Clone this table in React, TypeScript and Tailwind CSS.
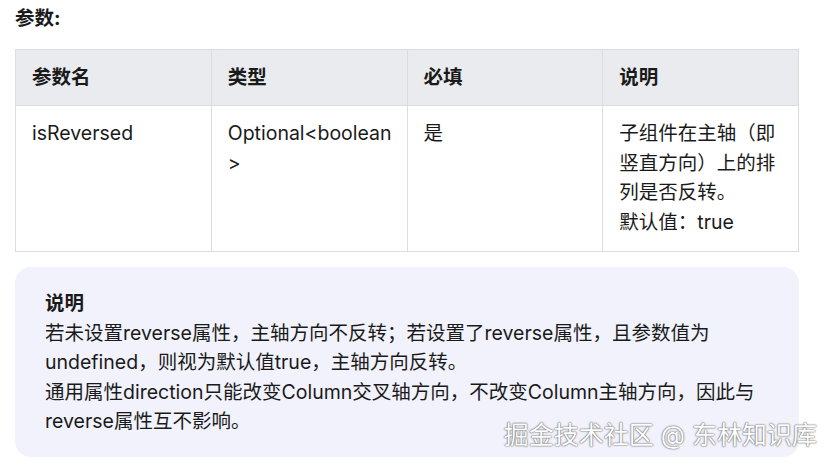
import React from 'react';

// 参数表 + 说明框
const columns = ['参数名', '类型', '必填', '说明'];

const App = () => {
  return (
    <div
      className="relative w-[833px] h-[464px] bg-white px-[15px] pt-[4px] text-[19.5px] leading-[29.5px] text-[#1a1a1a] overflow-hidden"
      style={{ fontFamily: 'Inter, "Noto Sans CJK SC", sans-serif' }}
    >
      <div className="font-bold">参数:</div>

      <table className="mt-[15px] w-[784px] border-collapse table-fixed">
        <thead>
          <tr className="bg-[#e9ebee]">
            {columns.map((col) => (
              <th
                key={col}
                className="border border-[#dcdcdc] px-4 py-[13px] text-left font-bold leading-[29.5px]"
              >
                {col}
              </th>
            ))}
          </tr>
        </thead>
        <tbody>
          <tr className="align-top">
            <td className="border border-[#dcdcdc] px-4 pt-[13px] pb-[14px]">isReversed</td>
            <td className="border border-[#dcdcdc] px-4 pt-[13px] pb-[14px]">
              Optional&lt;boolean
              <br />
              &gt;
            </td>
            <td className="border border-[#dcdcdc] px-4 pt-[13px] pb-[14px]">是</td>
            <td className="border border-[#dcdcdc] px-4 pt-[13px] pb-[14px]">
              <p>子组件在主轴（即竖直方向）上的排列是否反转。</p>
              <p>默认值：true</p>
            </td>
          </tr>
        </tbody>
      </table>

      <div className="mt-[15px] w-[784px] rounded-2xl bg-[#f1f2fb] px-[30px] pt-[22px] pb-5">
        <div className="font-bold">说明</div>
        <p>若未设置reverse属性，主轴方向不反转；若设置了reverse属性，且参数值为undefined，则视为默认值true，主轴方向反转。</p>
        <p>通用属性direction只能改变Column交叉轴方向，不改变Column主轴方向，因此与reverse属性互不影响。</p>
      </div>

      <div className="absolute right-[16px] bottom-[14px] text-[25px] leading-[30px] text-white [text-shadow:0_0_2px_#666,0_0_1px_#444]">
        掘金技术社区 @ 东林知识库
      </div>
    </div>
  );
};

export default App;
